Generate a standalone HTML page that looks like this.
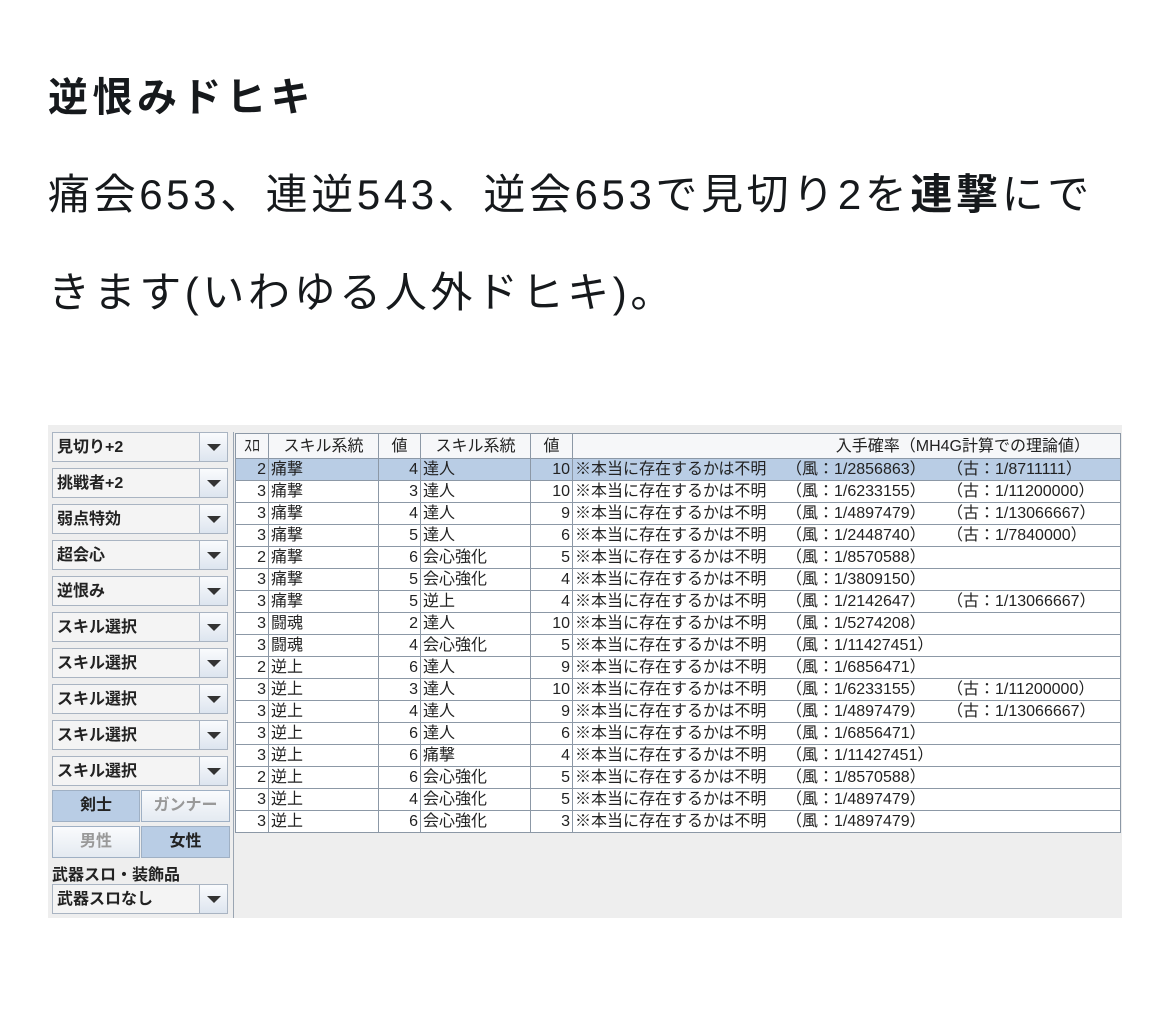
<!DOCTYPE html>
<html><head><meta charset="utf-8"><style>
body{margin:0;background:#fff;width:1170px;height:1016px;position:relative;overflow:hidden;font-family:"Liberation Sans","Noto Sans CJK JP",sans-serif;color:#16191c}
.h{position:absolute;left:48px;top:72px;font-size:40px;font-weight:bold;line-height:52px;white-space:nowrap;letter-spacing:4.5px}
.p{position:absolute;left:48px;top:146px;font-size:42px;line-height:98px;width:1100px;white-space:nowrap;letter-spacing:3.6px}
.panel{position:absolute;left:48px;top:425px;width:1074px;height:493px;background:#eeeeee}
.dd{position:absolute;left:52px;width:176px;height:30px;border:1px solid #a9b4c2;background:#f4f4f4;font-size:16px;font-weight:bold;color:#222;box-sizing:border-box}
.dd span{position:absolute;left:4px;top:4px;line-height:22px}
.dd i{position:absolute;right:0;top:0;width:27px;height:28px;border-left:1px solid #a9b4c2;background:linear-gradient(#fafbfd,#dde5ef)}
.dd i:after{content:"";position:absolute;left:7px;top:11px;border-left:7px solid transparent;border-right:7px solid transparent;border-top:7px solid #333}
.btn{position:absolute;height:32px;box-sizing:border-box;border:1px solid #9fb0c4;font-size:16px;font-weight:bold;text-align:center;line-height:30px}
.on{background:#b9cde5;color:#222}.off{background:linear-gradient(#fafbfd,#e4eaf1);color:#999}
table{position:absolute;left:235px;top:433px;border-collapse:collapse;font-size:16px;color:#222;table-layout:fixed}
td{border:1px solid #8c98a6;height:21px;padding:0 2px;line-height:21px;white-space:nowrap;overflow:hidden;position:relative}
tr.hd td{background:#f6f7f9;height:24px;text-align:center}
tr.sel td{background:#b9cde5}
tr td{background:#fff}
.r{text-align:right}
.a{position:absolute;left:213px;top:0}.b{position:absolute;left:374px;top:0}
</style></head><body>
<div class="h">逆恨みドヒキ</div>
<div class="p">痛会653、連逆543、逆会653で見切り2を<b>連撃</b>にで<br>きます(いわゆる人外ドヒキ)。</div>
<div class="panel"></div>
<div class="dd" style="top:432px"><span>見切り+2</span><i></i></div>
<div class="dd" style="top:468px"><span>挑戦者+2</span><i></i></div>
<div class="dd" style="top:504px"><span>弱点特効</span><i></i></div>
<div class="dd" style="top:540px"><span>超会心</span><i></i></div>
<div class="dd" style="top:576px"><span>逆恨み</span><i></i></div>
<div class="dd" style="top:612px"><span>スキル選択</span><i></i></div>
<div class="dd" style="top:648px"><span>スキル選択</span><i></i></div>
<div class="dd" style="top:684px"><span>スキル選択</span><i></i></div>
<div class="dd" style="top:720px"><span>スキル選択</span><i></i></div>
<div class="dd" style="top:756px"><span>スキル選択</span><i></i></div>
<div class="btn on" style="left:52px;top:790px;width:88px">剣士</div>
<div class="btn off" style="left:141px;top:790px;width:89px">ガンナー</div>
<div class="btn off" style="left:52px;top:826px;width:88px">男性</div>
<div class="btn on" style="left:141px;top:826px;width:89px">女性</div>
<div style="position:absolute;left:52px;top:861px;font-size:16px;font-weight:bold;color:#222">武器スロ・装飾品</div>
<div class="dd" style="top:884px"><span>武器スロなし</span><i></i></div>
<table>
<colgroup><col style="width:33px"><col style="width:110px"><col style="width:42px"><col style="width:110px"><col style="width:42px"><col style="width:548px"></colgroup>
<tr class="hd"><td>ｽﾛ</td><td>スキル系統</td><td>値</td><td>スキル系統</td><td>値</td><td style="text-align:right;padding-right:30px">入手確率（MH4G計算での理論値）</td></tr>
<tr class="sel"><td class="r">2</td><td>痛撃</td><td class="r">4</td><td>達人</td><td class="r">10</td><td>※本当に存在するかは不明<span class="a">（風：1/2856863）</span><span class="b">（古：1/8711111）</span></td></tr>
<tr><td class="r">3</td><td>痛撃</td><td class="r">3</td><td>達人</td><td class="r">10</td><td>※本当に存在するかは不明<span class="a">（風：1/6233155）</span><span class="b">（古：1/11200000）</span></td></tr>
<tr><td class="r">3</td><td>痛撃</td><td class="r">4</td><td>達人</td><td class="r">9</td><td>※本当に存在するかは不明<span class="a">（風：1/4897479）</span><span class="b">（古：1/13066667）</span></td></tr>
<tr><td class="r">3</td><td>痛撃</td><td class="r">5</td><td>達人</td><td class="r">6</td><td>※本当に存在するかは不明<span class="a">（風：1/2448740）</span><span class="b">（古：1/7840000）</span></td></tr>
<tr><td class="r">2</td><td>痛撃</td><td class="r">6</td><td>会心強化</td><td class="r">5</td><td>※本当に存在するかは不明<span class="a">（風：1/8570588）</span></td></tr>
<tr><td class="r">3</td><td>痛撃</td><td class="r">5</td><td>会心強化</td><td class="r">4</td><td>※本当に存在するかは不明<span class="a">（風：1/3809150）</span></td></tr>
<tr><td class="r">3</td><td>痛撃</td><td class="r">5</td><td>逆上</td><td class="r">4</td><td>※本当に存在するかは不明<span class="a">（風：1/2142647）</span><span class="b">（古：1/13066667）</span></td></tr>
<tr><td class="r">3</td><td>闘魂</td><td class="r">2</td><td>達人</td><td class="r">10</td><td>※本当に存在するかは不明<span class="a">（風：1/5274208）</span></td></tr>
<tr><td class="r">3</td><td>闘魂</td><td class="r">4</td><td>会心強化</td><td class="r">5</td><td>※本当に存在するかは不明<span class="a">（風：1/11427451）</span></td></tr>
<tr><td class="r">2</td><td>逆上</td><td class="r">6</td><td>達人</td><td class="r">9</td><td>※本当に存在するかは不明<span class="a">（風：1/6856471）</span></td></tr>
<tr><td class="r">3</td><td>逆上</td><td class="r">3</td><td>達人</td><td class="r">10</td><td>※本当に存在するかは不明<span class="a">（風：1/6233155）</span><span class="b">（古：1/11200000）</span></td></tr>
<tr><td class="r">3</td><td>逆上</td><td class="r">4</td><td>達人</td><td class="r">9</td><td>※本当に存在するかは不明<span class="a">（風：1/4897479）</span><span class="b">（古：1/13066667）</span></td></tr>
<tr><td class="r">3</td><td>逆上</td><td class="r">6</td><td>達人</td><td class="r">6</td><td>※本当に存在するかは不明<span class="a">（風：1/6856471）</span></td></tr>
<tr><td class="r">3</td><td>逆上</td><td class="r">6</td><td>痛撃</td><td class="r">4</td><td>※本当に存在するかは不明<span class="a">（風：1/11427451）</span></td></tr>
<tr><td class="r">2</td><td>逆上</td><td class="r">6</td><td>会心強化</td><td class="r">5</td><td>※本当に存在するかは不明<span class="a">（風：1/8570588）</span></td></tr>
<tr><td class="r">3</td><td>逆上</td><td class="r">4</td><td>会心強化</td><td class="r">5</td><td>※本当に存在するかは不明<span class="a">（風：1/4897479）</span></td></tr>
<tr><td class="r">3</td><td>逆上</td><td class="r">6</td><td>会心強化</td><td class="r">3</td><td>※本当に存在するかは不明<span class="a">（風：1/4897479）</span></td></tr>
</table>
<div style="position:absolute;left:233px;top:432px;width:1px;height:486px;background:#9aa5b2"></div>
</body></html>
